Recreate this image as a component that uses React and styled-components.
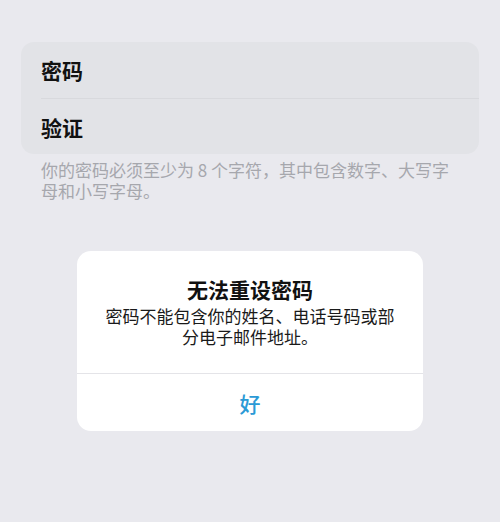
import React from "react";
import styled, { createGlobalStyle } from "styled-components";

const GlobalStyle = createGlobalStyle`
  html, body {
    margin: 0;
    padding: 0;
    background: #e9e9ee;
    font-family: "Noto Sans CJK SC", "Noto Sans", sans-serif;
  }
`;

const Page = styled.div`
  width: 500px;
  height: 522px;
  padding-top: 42px;
  box-sizing: border-box;
  background: #e9e9ee;
  overflow: hidden;
`;

const Group = styled.div`
  margin: 0 21px;
  background: #e2e3e7;
  border-radius: 13px;
  overflow: hidden;
`;

const Row = styled.div`
  height: 56px;
  display: flex;
  align-items: center;
  margin-left: 20px;
  font-size: 21px;
  font-weight: 700;
  color: #111;
  border-top: ${({ $first }) => ($first ? "none" : "1px solid #d8d9dd")};
  box-sizing: border-box;
`;

const Footer = styled.p`
  margin: 5px 39px 0 41px;
  font-size: 17px;
  line-height: 21px;
  color: #a6a7ad;
`;

const Dialog = styled.div`
  width: 346px;
  margin: 50px auto 0;
  background: #fff;
  border-radius: 14px;
  overflow: hidden;
`;

const Body = styled.div`
  padding: 24px 24px 26px;
  text-align: center;
`;

const Title = styled.h2`
  margin: 0;
  font-size: 21px;
  line-height: 28px;
  font-weight: 700;
  color: #111;
`;

const Message = styled.p`
  margin: 2px 0 0;
  font-size: 17px;
  line-height: 21px;
  color: #1a1a1a;
`;

const Action = styled.button`
  display: block;
  width: 100%;
  height: 58px;
  border: none;
  border-top: 1px solid #e4e4e8;
  background: transparent;
  font-family: inherit;
  font-size: 21px;
  font-weight: 500;
  color: #2b9ad6;
  padding: 0;
`;

export default function App() {
  return (
    <Page>
      <GlobalStyle />
      <Group>
        <Row $first>密码</Row>
        <Row>验证</Row>
      </Group>
      <Footer>你的密码必须至少为 8 个字符，其中包含数字、大写字母和小写字母。</Footer>
      <Dialog>
        <Body>
          <Title>无法重设密码</Title>
          <Message>密码不能包含你的姓名、电话号码或部分电子邮件地址。</Message>
        </Body>
        <Action>好</Action>
      </Dialog>
    </Page>
  );
}
